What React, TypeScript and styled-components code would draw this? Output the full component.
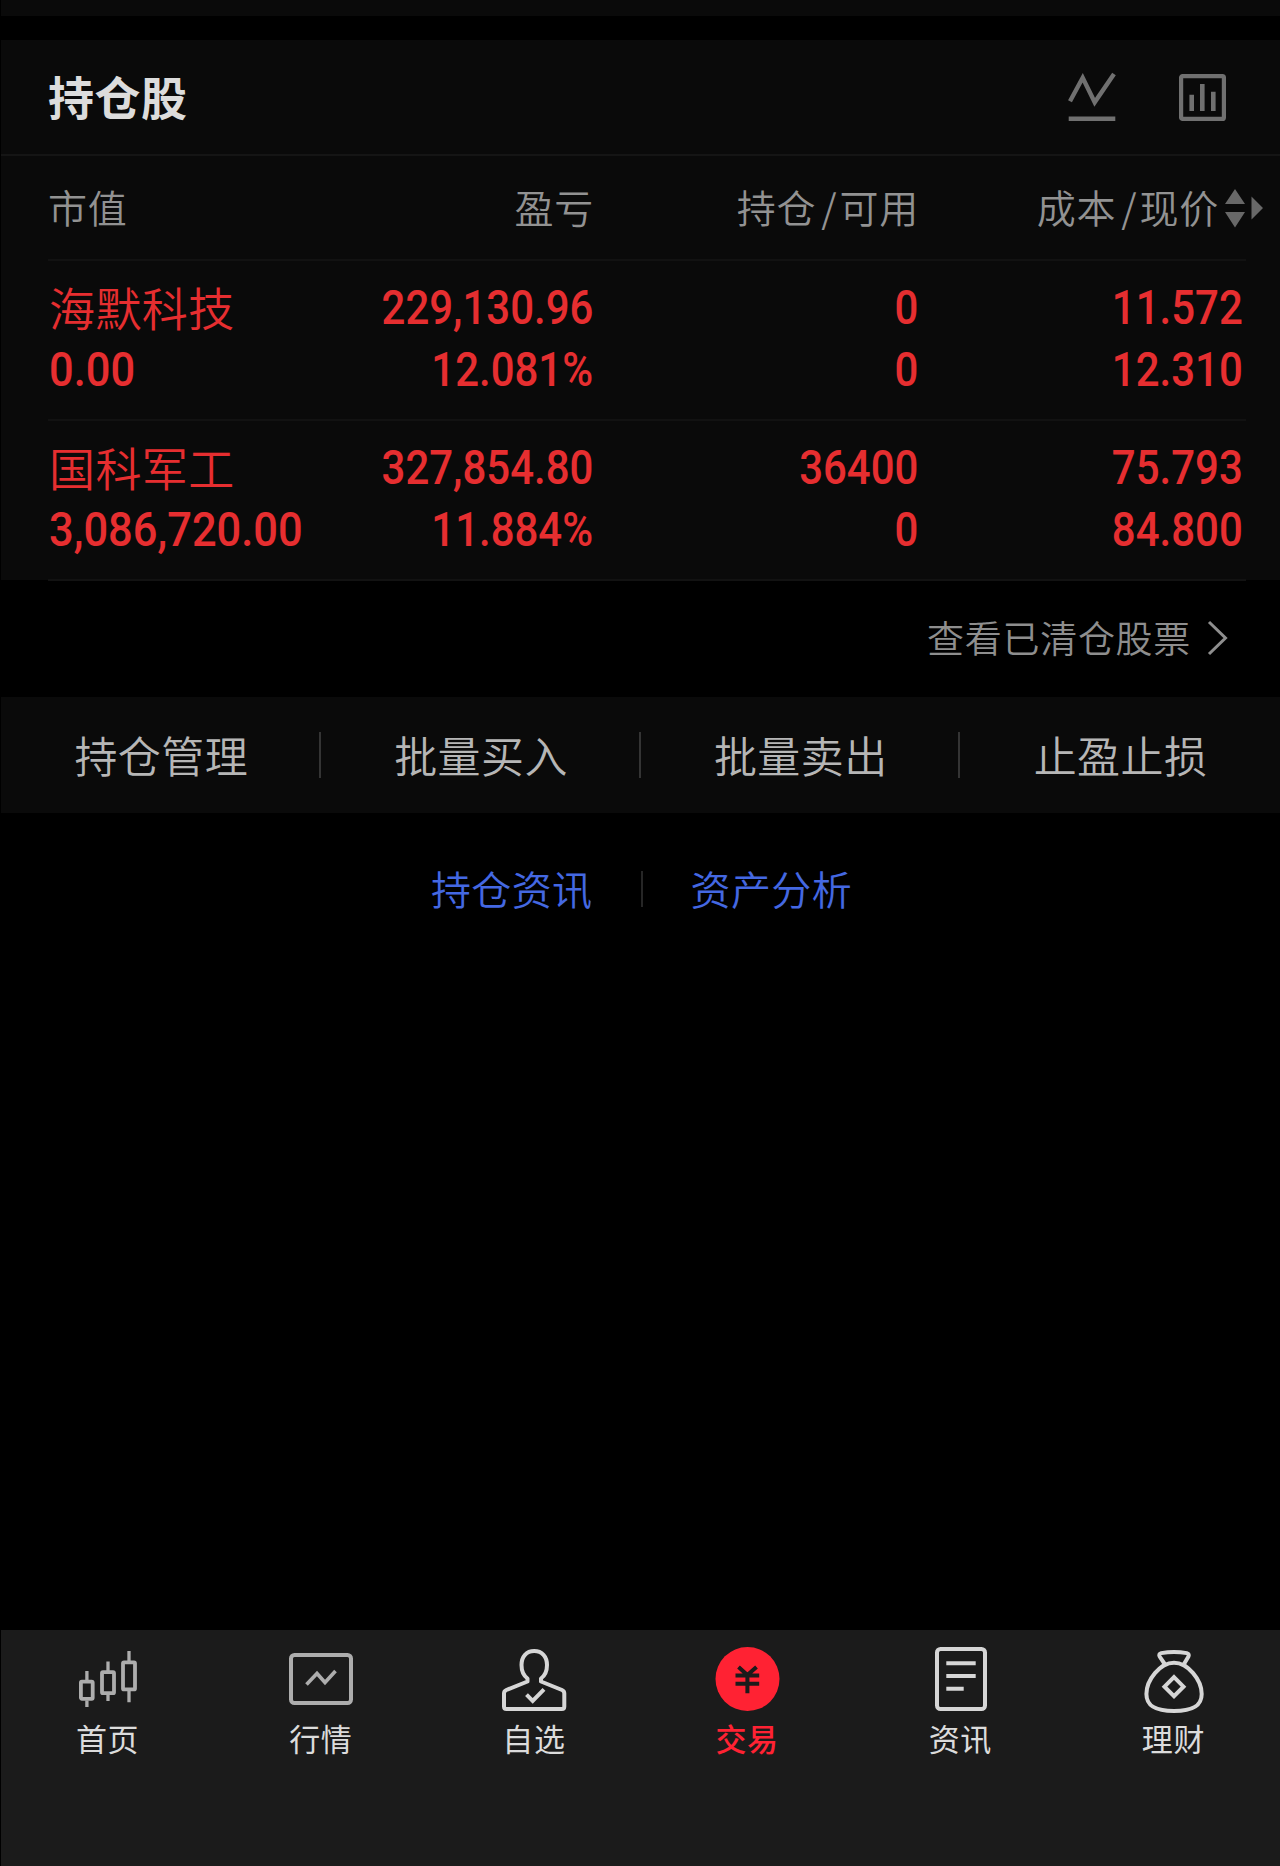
import React from 'react';
import styled, { createGlobalStyle } from 'styled-components';

const cjk = `"Noto Sans CJK SC", "Noto Sans", sans-serif`;

const GlobalStyle = createGlobalStyle`
  * { box-sizing: border-box; }
  html, body { margin: 0; padding: 0; background: #000; }
  body { font-family: ${cjk}; }
`;

const Page = styled.main`
  width: 1280px;
  height: 1866px;
  display: flex;
  flex-direction: column;
  background: #000;
  overflow: hidden;
`;

const TopStrip = styled.div`
  height: 16px;
  margin: 0 0 24px 1px;
  background: #0a0a0a;
`;

const Panel = styled.section`
  height: 540px;
  margin-left: 1px;
  background: #0a0a0a;
`;

const PanelHeader = styled.header`
  height: 116px;
  padding: 0 54px 0 47px;
  display: flex;
  align-items: center;
  justify-content: space-between;
  border-bottom: 2px solid #151515;
`;

const Title = styled.h1`
  margin: 0;
  padding-bottom: 5px;
  font-size: 46px;
  line-height: 60px;
  font-weight: 700;
  letter-spacing: 0.5px;
  color: #dcdcdc;
`;

const HeaderTools = styled.div`
  display: flex;
  gap: 63px;
  color: #707070;
`;

const Table = styled.div`
  margin: 0 34px 0 47px;
`;

const Row = styled.div<{ $height: number }>`
  height: ${(p) => p.$height}px;
  padding: 0 3px 0 1px;
  display: grid;
  grid-template-columns: minmax(0, 1fr) 325px 325px 325px;
  align-items: center;
  border-bottom: 2px solid #121212;
`;

const HeadCell = styled.div<{ $end?: boolean }>`
  display: flex;
  align-items: center;
  justify-content: ${(p) => (p.$end ? 'flex-end' : 'flex-start')};
  margin: 0 -1px;
  padding-bottom: 3px;
  font-size: 39px;
  line-height: 50px;
  letter-spacing: 0.8px;
  font-weight: 350;
  color: #929292;
`;

const Slash = styled.span`
  margin: 0 2px 0 5px;
`;

const SortMarks = styled.span`
  display: flex;
  margin: 3px -20px 0 5px;
  color: #686868;
`;

const Cell = styled.div<{ $end?: boolean }>`
  display: flex;
  flex-direction: column;
  align-items: ${(p) => (p.$end ? 'flex-end' : 'flex-start')};
  padding-bottom: 2px;
  color: #e62e30;
`;

const StockName = styled.span`
  height: 62px;
  font-size: 46px;
  line-height: 58px;
  letter-spacing: 0.4px;
  font-weight: 350;
`;

const Figure = styled.span<{ $end?: boolean }>`
  font-family: Roboto, "Liberation Sans", sans-serif;
  font-size: 48px;
  line-height: 62px;
  font-weight: 500;
  white-space: nowrap;
  transform: scaleX(${(p) => (p.$end ? 0.874 : 0.905)});
  transform-origin: ${(p) => (p.$end ? 'right' : 'left')} center;
`;

const ClearedLink = styled.a`
  height: 117px;
  padding: 0 52px 1px 0;
  display: flex;
  align-items: center;
  justify-content: flex-end;
  gap: 16px;
  font-size: 37px;
  line-height: 50px;
  letter-spacing: 0.7px;
  font-weight: 350;
  color: #8e8e8e;
`;

const ClearedText = styled.span`
  padding-bottom: 2px;
`;

const ActionBar = styled.div`
  height: 116px;
  margin-left: 1px;
  display: grid;
  grid-template-columns: repeat(4, 1fr);
  align-items: center;
  background: #0a0a0a;
`;

const Action = styled.button`
  height: 46px;
  padding: 0 0 2px 3px;
  border: 0;
  border-right: 2px solid #343434;
  background: none;
  font-family: ${cjk};
  font-size: 43px;
  line-height: 42px;
  letter-spacing: 0.5px;
  font-weight: 350;
  color: #b6b6b6;
  &:last-child { border-right-color: transparent; }
`;

const InfoLinks = styled.nav`
  height: 150px;
  display: flex;
  align-items: center;
  justify-content: center;
  padding-left: 3px;
`;

const InfoLink = styled.a`
  font-size: 40px;
  line-height: 52px;
  letter-spacing: 0.4px;
  font-weight: 350;
  color: #4468e2;
`;

const InfoDivider = styled.span`
  width: 2px;
  height: 36px;
  margin: 2px 48px 0 48px;
  background: #262626;
`;

const TabBar = styled.nav`
  height: 236px;
  margin: auto 0 0 1px;
  padding-top: 17px;
  display: grid;
  grid-template-columns: repeat(6, 1fr);
  background: #1b1b1b;
`;

const Tab = styled.a<{ $color: string; $active: boolean }>`
  display: flex;
  flex-direction: column;
  align-items: center;
  color: ${(p) => p.$color};
  span {
    margin-top: 5px;
    font-size: 31px;
    line-height: 44px;
    letter-spacing: 0.6px;
    font-weight: ${(p) => (p.$active ? 500 : 400)};
    color: ${(p) => (p.$active ? '#ff2233' : '#dcdcdc')};
  }
`;

const Glyph = styled.svg`
  display: block;
  flex: none;
  overflow: visible;
  fill: none;
  stroke: currentColor;
`;

const TrendIcon = () => (
  <Glyph width="48" height="48" viewBox="0 0 48 48" strokeWidth="4.4">
    <path d="M2 28.3 14.7 4.8 26.7 29.3 46 1M.7 45.7h46.6" />
  </Glyph>
);

const BarsIcon = () => (
  <Glyph width="47" height="47" viewBox="0 -1 47 47" strokeWidth="4.2">
    <rect x="2.1" y="2.1" width="42.8" height="42.8" rx="1.5" />
    <path d="M12.7 20.7V37M23.3 10V37M34.3 17.7V37" strokeWidth="4.6" />
  </Glyph>
);

const SortIcon = () => (
  <Glyph width="40" height="40" viewBox="0 0 40 40">
    <path d="M11 1 21 16H1ZM11 39.500 21 24H1ZM27.500 8.500 39 20 27.500 31.500Z" fill="currentColor" stroke="none" />
  </Glyph>
);

const ChevronIcon = () => (
  <Glyph width="21" height="36" viewBox="0 0 21 36" strokeWidth="3">
    <path d="M2 2 18.500 18 2 34" />
  </Glyph>
);

const TabGlyph = ({ children }: { children: React.ReactNode }) => (
  <Glyph width="64" height="64" viewBox="0 0 64 64" strokeWidth="4">
    {children}
  </Glyph>
);

const tabs = [
  {
    label: '首页',
    color: '#adadad',
    icon: (
      <g strokeWidth="3.8">
        <rect x="4.900" y="34.600" width="11.800" height="17.200" rx="1" />
        <rect x="26" y="25.200" width="12" height="21" rx="1" />
        <rect x="47" y="15.400" width="12" height="27" rx="1" />
        <path d="M10.900 24v9M10.900 53.500V60M32 14.500V24M32 48v6M53 4v10M53 44v11.300" strokeWidth="3.300" />
      </g>
    ),
  },
  {
    label: '行情',
    color: '#adadad',
    icon: (
      <>
        <rect x="2" y="8" width="60" height="48" rx="3.500" />
        <path d="M17.500 37.500 28 26.500 36 35.500 46.500 24" strokeWidth="3.600" />
      </>
    ),
  },
  {
    label: '自选',
    color: '#d6d6d6',
    icon: (
      <>
        <path d="M25.500 34.500V31.500C21.500 28.500 19.500 24 19.500 18 19.500 9.500 24.500 4 32.200 4S45 9.500 45 18C45 24 43 28.500 39 31.500V34.500L60 43Q62.300 44 62.300 46.500V59.500Q62.300 62 59.800 62H4.500Q2 62 2 59.500V46.500Q2 44 4.300 43Z" strokeLinejoin="round" />
        <path d="M24.500 47.700 30.700 54 42 42.300" />
      </>
    ),
  },
  {
    label: '交易',
    color: '#ff2233',
    icon: (
      <>
        <circle cx="32.500" cy="32" r="32" fill="currentColor" stroke="none" />
        <path d="M23.500 20 32.400 28 41.500 20M20.500 28.400h23.700M20.500 36.700h23.700M32.400 28v18.300" stroke="#1b1b1b" />
      </>
    ),
  },
  {
    label: '资讯',
    color: '#d6d6d6',
    icon: (
      <>
        <rect x="9" y="2" width="48" height="60" rx="3.500" />
        <path d="M18.300 16.300h29.400M18.300 29h29.400M18.300 41.700h17.400" />
      </>
    ),
  },
  {
    label: '理财',
    color: '#d6d6d6',
    icon: (
      <>
        <path d="M33 15.700C47 15.700 60.700 33 60.700 47 60.700 60 50 64 33 64S5.400 60 5.400 47C5.400 33 19 15.700 33 15.700Z" />
        <path d="M23.700 17 18.800 9.800Q17.200 6.900 20.200 6.100 33 3.700 45.800 6.100 48.800 6.900 47.300 9.800L43 17" />
        <path d="M33 30.200 42.500 39.700 33 49.200 23.500 39.700Z" />
      </>
    ),
  },
];

const holdings = [
  { name: '海默科技', value: '0.00', profit: ['229,130.96', '12.081%'], shares: ['0', '0'], price: ['11.572', '12.310'] },
  { name: '国科军工', value: '3,086,720.00', profit: ['327,854.80', '11.884%'], shares: ['36400', '0'], price: ['75.793', '84.800'] },
];

const FigurePair = ({ values }: { values: string[] }) => (
  <Cell $end>
    {values.map((v, i) => (
      <Figure $end key={i}>{v}</Figure>
    ))}
  </Cell>
);

export default function App() {
  return (
    <Page>
      <GlobalStyle />
      <TopStrip />
      <Panel>
        <PanelHeader>
          <Title>持仓股</Title>
          <HeaderTools>
            <TrendIcon />
            <BarsIcon />
          </HeaderTools>
        </PanelHeader>
        <Table>
          <Row $height={105}>
            <HeadCell>市值</HeadCell>
            <HeadCell $end>盈亏</HeadCell>
            <HeadCell $end>持仓<Slash>/</Slash>可用</HeadCell>
            <HeadCell $end>
              成本<Slash>/</Slash>现价
              <SortMarks><SortIcon /></SortMarks>
            </HeadCell>
          </Row>
          {holdings.map((h) => (
            <Row $height={160} key={h.name}>
              <Cell>
                <StockName>{h.name}</StockName>
                <Figure>{h.value}</Figure>
              </Cell>
              <FigurePair values={h.profit} />
              <FigurePair values={h.shares} />
              <FigurePair values={h.price} />
            </Row>
          ))}
        </Table>
      </Panel>
      <ClearedLink>
        <ClearedText>查看已清仓股票</ClearedText>
        <ChevronIcon />
      </ClearedLink>
      <ActionBar>
        <Action>持仓管理</Action>
        <Action>批量买入</Action>
        <Action>批量卖出</Action>
        <Action>止盈止损</Action>
      </ActionBar>
      <InfoLinks>
        <InfoLink>持仓资讯</InfoLink>
        <InfoDivider />
        <InfoLink>资产分析</InfoLink>
      </InfoLinks>
      <TabBar>
        {tabs.map((t) => (
          <Tab key={t.label} $color={t.color} $active={t.label === '交易'}>
            <TabGlyph>{t.icon}</TabGlyph>
            <span>{t.label}</span>
          </Tab>
        ))}
      </TabBar>
    </Page>
  );
}
